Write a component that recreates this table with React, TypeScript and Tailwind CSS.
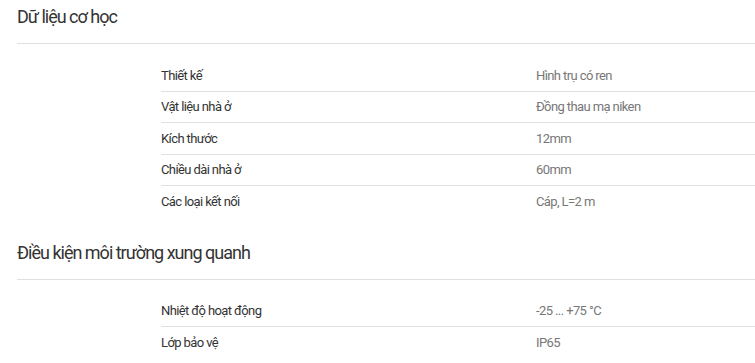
const sections = [
  {
    title: "Dữ liệu cơ học",
    rows: [
      { label: "Thiết kế", value: "Hình trụ có ren" },
      { label: "Vật liệu nhà ở", value: "Đồng thau mạ niken" },
      { label: "Kích thước", value: "12mm" },
      { label: "Chiều dài nhà ở", value: "60mm" },
      { label: "Các loại kết nối", value: "Cáp, L=2 m" },
    ],
  },
  {
    title: "Điều kiện môi trường xung quanh",
    rows: [
      { label: "Nhiệt độ hoạt động", value: "-25 ... +75 °C" },
      { label: "Lớp bảo vệ", value: "IP65" },
    ],
  },
];

const App = () => {
  return (
    <div className="min-h-screen bg-white pl-[17px] font-['Roboto',sans-serif]">
      {sections.map((section, i) => (
        <section key={section.title} className={i > 0 ? "mt-[21px]" : "pt-[3px]"}>
          {/* Section heading */}
          <h2 className="border-b border-[#e0e0e0] pb-3 text-lg leading-7 tracking-[-1px] text-[#333]">
            {section.title}
          </h2>

          {/* Rows */}
          <ul className="mt-4 ml-[144px]">
            {section.rows.map((row, j) => (
              <li
                key={row.label}
                className={
                  j < section.rows.length - 1
                    ? "flex h-[31.5px] items-center border-b border-[#e0e0e0] text-[13px] tracking-[-0.6px]"
                    : "flex h-[31.5px] items-center text-[13px] tracking-[-0.6px]"
                }
              >
                <span className="w-[375px] text-[#333]">{row.label}</span>
                <span className="text-[#777]">{row.value}</span>
              </li>
            ))}
          </ul>
        </section>
      ))}
    </div>
  );
};

export default App;
